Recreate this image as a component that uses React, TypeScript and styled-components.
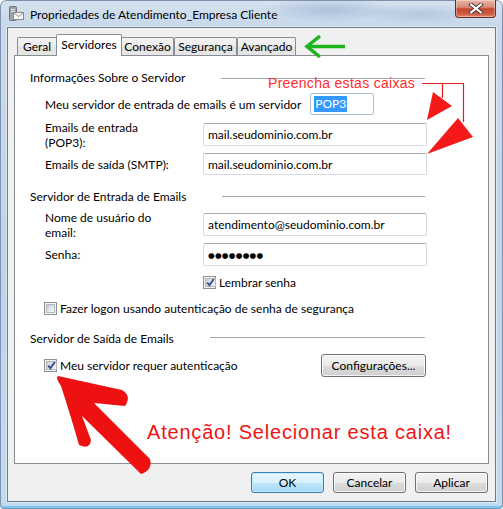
import React from "react";
import styled, { createGlobalStyle } from "styled-components";

const Global = createGlobalStyle`
  html, body { margin: 0; padding: 0; background: #ffffff; }
  body { width: 503px; height: 509px; overflow: hidden; font-family: Lato, "Liberation Sans", sans-serif; font-size: 12px; color: #000; }
  * { box-sizing: border-box; }
`;

const Window = styled.div`
  position: relative;
  width: 503px;
  height: 509px;
  padding: 1px;
  border-radius: 6px 6px 4px 4px;
  overflow: hidden;
  display: flex;
  flex-direction: column;
  background:
    radial-gradient(ellipse 70px 12px at 330px 10px, rgba(110, 140, 185, 0.35), rgba(110, 140, 185, 0)),
    radial-gradient(ellipse 60px 10px at 420px 14px, rgba(120, 150, 190, 0.3), rgba(120, 150, 190, 0)),
    linear-gradient(180deg, #d5e1ee 0px, #c8d9ec 26px, #bed4eb 55%, #c3d9f0 100%);
  box-shadow: inset 0 0 0 1px #7e93ad, inset 0 -3px 0 #79c8f0;
`;

const TitleBar = styled.div`
  height: 26px;
  display: flex;
  align-items: flex-start;
  padding-left: 7px;
  flex: none;
`;

const TitleIcon = styled.svg`
  margin-top: 4px;
  flex: none;
`;

const TitleText = styled.span`
  flex: 1;
  margin: 6px 0 0 5px;
  font-size: 12px;
  line-height: 16px;
  color: #000;
  white-space: nowrap;
`;

const CloseButton = styled.div`
  width: 41px;
  height: 18px;
  margin: -1px 6px 0 0;
  border: 1px solid #6d2a20;
  border-top: none;
  border-radius: 0 0 4px 4px;
  background: linear-gradient(180deg, #e9b3a6 0%, #d98c79 42%, #c5472f 52%, #cf5a3f 80%, #dd8a6c 100%);
  box-shadow: inset 0 0 0 1px rgba(255, 255, 255, 0.35);
  display: flex;
  align-items: center;
  justify-content: center;
  flex: none;
`;

const Client = styled.div`
  flex: 1;
  margin: 0 6px 6px 6px;
  border: 1px solid #6b7a8c;
  background: #f0f0f0;
  display: flex;
  flex-direction: column;
  padding: 6px 6px 0 6px;
  box-shadow: 0 0 0 1px rgba(255, 255, 255, 0.5);
`;

const TabStrip = styled.div`
  height: 21px;
  display: flex;
  align-items: flex-start;
  padding-left: 3px;
  position: relative;
  z-index: 1;
  flex: none;
`;

const Tab = styled.div<{ $active?: boolean; $w: number }>`
  width: ${(p) => p.$w}px;
  height: ${(p) => (p.$active ? 22 : 18)}px;
  margin-top: ${(p) => (p.$active ? 0 : 3)}px;
  margin-left: ${(p) => (p.$active ? -1 : 0)}px;
  margin-right: ${(p) => (p.$active ? -1 : 0)}px;
  border: 1px solid #898c95;
  border-bottom: none;
  border-radius: 2px 2px 0 0;
  background: ${(p) =>
    p.$active
      ? "#ffffff"
      : "linear-gradient(180deg, #f4f4f4 0%, #ececec 50%, #e2e2e2 51%, #e6e6e6 100%)"};
  display: flex;
  align-items: center;
  justify-content: center;
  font-size: 12px;
  white-space: nowrap;
  position: relative;
  z-index: ${(p) => (p.$active ? 2 : 1)};
  padding-bottom: ${(p) => (p.$active ? 2 : 0)}px;
  flex: none;
`;

const Panel = styled.div`
  height: 409px;
  border: 1px solid #898c95;
  background: #ffffff;
  padding: 14px 0 0 15px;
  flex: none;
  display: flex;
  flex-direction: column;
`;

const SectionTitle = styled.div<{ $mt?: number }>`
  display: flex;
  align-items: center;
  height: 16px;
  margin-top: ${(p) => p.$mt ?? 0}px;
  margin-right: 63px;
  line-height: 16px;
  white-space: nowrap;
  flex: none;
`;

const Rule = styled.div<{ $up?: number }>`
  flex: 1;
  height: 1px;
  margin-left: 36px;
  background: #a8a8a8;
  position: relative;
  top: ${(p) => -(p.$up ?? 0)}px;
`;

const FieldRow = styled.div<{ $mt: number; $h?: number }>`
  display: flex;
  align-items: center;
  margin-top: ${(p) => p.$mt}px;
  padding-left: 15px;
  height: ${(p) => p.$h ?? 23}px;
  flex: none;
`;

const FieldLabel = styled.span`
  width: 158px;
  flex: none;
  line-height: 15px;
`;

const TextBox = styled.div`
  width: 224px;
  height: 100%;
  border: 1px solid #d7dae0;
  border-top-color: #abadb3;
  border-radius: 2px;
  background: #fff;
  padding-left: 4px;
  display: flex;
  align-items: center;
  white-space: nowrap;
  flex: none;
`;

const Dots = styled.span`
  font-family: "DejaVu Sans", sans-serif;
  font-size: 7.6px;
  letter-spacing: 0.3px;
  padding-top: 1px;
`;

const InlineText = styled.span`
  line-height: 15px;
  white-space: nowrap;
`;

const SmallBox = styled.div`
  width: 64px;
  height: 100%;
  margin-left: 9px;
  border: 1px solid #a9bfd6;
  border-radius: 2px;
  background: #fff;
  padding-left: 3px;
  display: flex;
  align-items: center;
  flex: none;
`;

const Selected = styled.span`
  background: #3399ff;
  color: #fff;
  line-height: 16px;
  padding: 0 1px;
`;

const CheckRow = styled.div<{ $mt: number; $pl: number }>`
  display: flex;
  align-items: center;
  gap: 3px;
  margin-top: ${(p) => p.$mt}px;
  padding-left: ${(p) => p.$pl}px;
  height: 16px;
  white-space: nowrap;
  flex: none;
`;

const Box = styled.span`
  width: 13px;
  height: 13px;
  border: 1px solid #8e8f8f;
  background: #f4f4f4;
  padding: 1px;
  display: inline-flex;
  flex: none;
`;

const BoxInner = styled.span`
  flex: 1;
  border: 1px solid #b2b7be;
  background: linear-gradient(135deg, #c9ced5 0%, #e4e7eb 55%, #f7f7f7 100%);
  display: flex;
  align-items: center;
  justify-content: center;
`;

const PushButton = styled.div<{ $w: number; $h: number; $default?: boolean }>`
  width: ${(p) => p.$w}px;
  height: ${(p) => p.$h}px;
  border-radius: 3px;
  border: 1px solid ${(p) => (p.$default ? "#3c7fb1" : "#707070")};
  background: ${(p) =>
    p.$default
      ? "linear-gradient(180deg, #eaf6fd 0%, #d9f0fc 50%, #bee6fd 51%, #a7d9f5 100%)"
      : "linear-gradient(180deg, #f2f2f2 0%, #ebebeb 50%, #dddddd 51%, #cfcfcf 100%)"};
  box-shadow: inset 0 0 0 1px ${(p) => (p.$default ? "rgba(190,235,255,0.9)" : "rgba(255,255,255,0.75)")};
  display: flex;
  align-items: center;
  justify-content: center;
  font-size: 12px;
  white-space: nowrap;
  flex: none;
`;

const ButtonSpacer = styled.div`
  flex: 1;
`;

const BottomRow = styled.div`
  display: flex;
  align-items: center;
  margin-top: 7px;
  margin-right: 62px;
  padding-left: 14px;
  height: 23px;
  gap: 3px;
  white-space: nowrap;
  flex: none;
`;

const Footer = styled.div`
  display: flex;
  justify-content: flex-end;
  gap: 9px;
  margin-top: 8px;
  padding-right: 1px;
  flex: none;
`;

const Overlay = styled.svg`
  position: absolute;
  left: 0;
  top: 0;
  pointer-events: none;
  z-index: 5;
`;

const FillNote = styled.span`
  position: absolute;
  left: 268px;
  top: 74px;
  font-family: "Liberation Sans", Arial, sans-serif;
  font-size: 14px;
  line-height: 18px;
  letter-spacing: 0.3px;
  color: #ff2a2a;
  white-space: nowrap;
  z-index: 6;
`;

const AttentionNote = styled.span`
  position: absolute;
  left: 147px;
  top: 420px;
  font-family: "Liberation Sans", Arial, sans-serif;
  font-size: 20px;
  line-height: 24px;
  letter-spacing: 0.8px;
  color: #ee1414;
  white-space: nowrap;
  z-index: 6;
`;

const CheckBox = ({ checked }: { checked?: boolean }) => (
  <Box>
    <BoxInner>
      {checked && (
        <svg width="9" height="9" viewBox="0 0 9 9">
          <path d="M1.2 4.6 L3.4 7.2 L7.8 1" fill="none" stroke="#34508a" strokeWidth="1.9" />
        </svg>
      )}
    </BoxInner>
  </Box>
);

export default function App() {
  return (
    <>
      <Global />
      <Window>
        <TitleBar>
          <TitleIcon width="17" height="17" viewBox="0 0 17 17">
            <rect x="1.5" y="1.5" width="7" height="14" rx="1" fill="#9aa0a8" stroke="#6e747c" />
            <rect x="3" y="4" width="4" height="1" fill="#e6e8ea" />
            <rect x="3" y="6" width="4" height="1" fill="#e6e8ea" />
            <rect x="5.5" y="7.5" width="10" height="7" fill="#f7f7f7" stroke="#8d8d8d" />
            <path d="M5.5 7.5 L10.5 11.5 L15.5 7.5" fill="none" stroke="#8d8d8d" />
          </TitleIcon>
          <TitleText>Propriedades de Atendimento_Empresa Cliente</TitleText>
          <CloseButton>
            <svg width="16" height="11" viewBox="0 0 16 11">
              <path d="M3 1.5 L13 9.5 M13 1.5 L3 9.5" stroke="#4a3a38" strokeWidth="4" strokeLinecap="square" />
              <path d="M3 1.5 L13 9.5 M13 1.5 L3 9.5" stroke="#ffffff" strokeWidth="2" strokeLinecap="square" />
            </svg>
          </CloseButton>
        </TitleBar>
        <Client>
          <TabStrip>
            <Tab $w={40}>Geral</Tab>
            <Tab $w={66} $active>Servidores</Tab>
            <Tab $w={53}>Conexão</Tab>
            <Tab $w={63}>Segurança</Tab>
            <Tab $w={59}>Avançado</Tab>
          </TabStrip>
          <Panel>
            <SectionTitle>
              Informações Sobre o Servidor
              <Rule />
            </SectionTitle>
            <FieldRow $mt={7} $h={22}>
              <InlineText>Meu servidor de entrada de emails é um servidor</InlineText>
              <SmallBox>
                <Selected>POP3</Selected>
              </SmallBox>
            </FieldRow>
            <FieldRow $mt={8}>
              <FieldLabel>
                Emails de entrada
                <br />
                (POP3):
              </FieldLabel>
              <TextBox>mail.seudominio.com.br</TextBox>
            </FieldRow>
            <FieldRow $mt={7} $h={22}>
              <FieldLabel>Emails de saída (SMTP):</FieldLabel>
              <TextBox>mail.seudominio.com.br</TextBox>
            </FieldRow>
            <SectionTitle $mt={14}>
              Servidor de Entrada de Emails
              <Rule $up={1} />
            </SectionTitle>
            <FieldRow $mt={8}>
              <FieldLabel>
                Nome de usuário do
                <br />
                email:
              </FieldLabel>
              <TextBox>atendimento@seudominio.com.br</TextBox>
            </FieldRow>
            <FieldRow $mt={7}>
              <FieldLabel>Senha:</FieldLabel>
              <TextBox>
                <Dots>●●●●●●●●</Dots>
              </TextBox>
            </FieldRow>
            <CheckRow $mt={8} $pl={173}>
              <CheckBox checked />
              Lembrar senha
            </CheckRow>
            <CheckRow $mt={10} $pl={14}>
              <CheckBox />
              Fazer logon usando autenticação de senha de segurança
            </CheckRow>
            <SectionTitle $mt={15}>
              Servidor de Saída de Emails
              <Rule $up={2} />
            </SectionTitle>
            <BottomRow>
              <CheckBox checked />
              Meu servidor requer autenticação
              <ButtonSpacer />
              <PushButton $w={105} $h={23}>
                Configurações...
              </PushButton>
            </BottomRow>
          </Panel>
          <Footer>
            <PushButton $w={73} $h={21} $default>
              OK
            </PushButton>
            <PushButton $w={73} $h={21}>
              Cancelar
            </PushButton>
            <PushButton $w={73} $h={21}>
              Aplicar
            </PushButton>
          </Footer>
        </Client>

        <Overlay width="503" height="509" viewBox="0 0 503 509">
          <path d="M307 46.5 H345" stroke="#1db41d" strokeWidth="3.5" fill="none" />
          <path d="M320 36 L307 46.5 L320 57" stroke="#1db41d" strokeWidth="3.5" fill="none" />
          <path d="M422 83.5 H463.5 V122 M442.5 83.5 V98" stroke="#e41b1b" strokeWidth="1.2" fill="none" />
          <path d="M433 92 L452 106 L427 120 Z" fill="#f41a1a" />
          <path d="M458 118 L473 137 L427 154 Z" fill="#f41a1a" />
          <path
            d="M58 376 L122 390 Q132 396 125 406 L94 403 L150 459 Q153 470 141 474 L82 416 L91 440 Q90 450 79 445 Q72 420 61 386 Q55 377 58 376 Z"
            fill="#ee1111"
          />
        </Overlay>
        <FillNote>Preencha estas caixas</FillNote>
        <AttentionNote>Atenção! Selecionar esta caixa!</AttentionNote>
      </Window>
    </>
  );
}
